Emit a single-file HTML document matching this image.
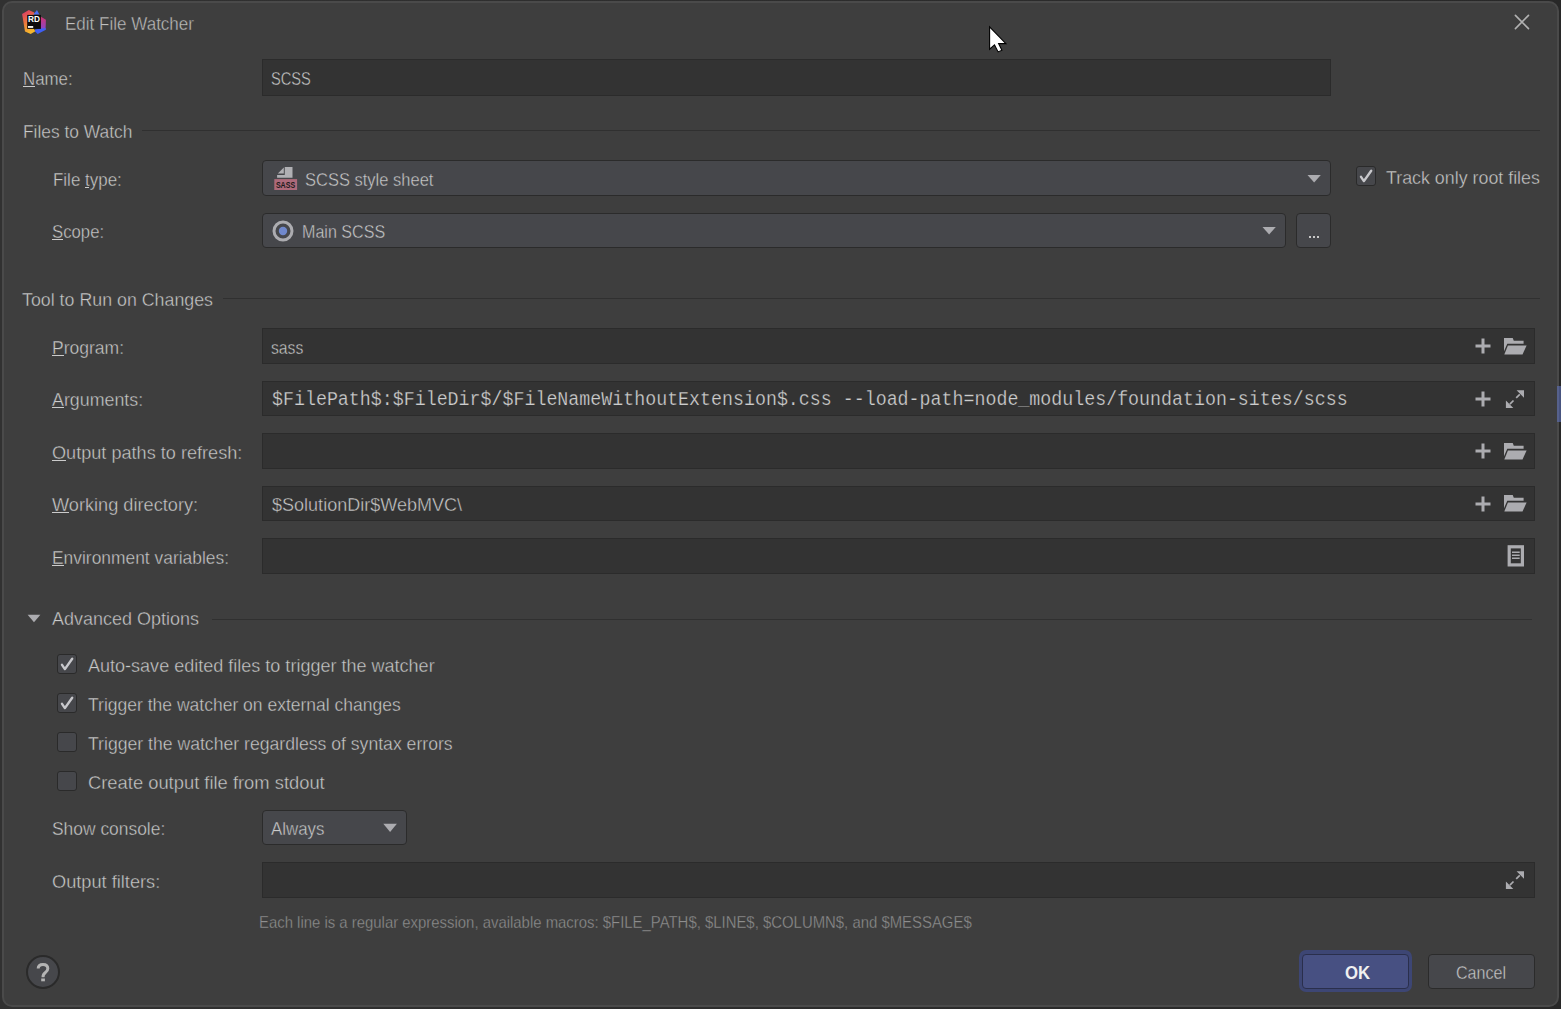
<!DOCTYPE html>
<html><head><meta charset="utf-8"><style>
html,body{margin:0;padding:0;width:1561px;height:1009px;overflow:hidden;background:linear-gradient(to right,#313131,#282828)}
.r{position:absolute;box-sizing:border-box}
.t{position:absolute;white-space:pre;margin:0;padding:0;transform-origin:0 0}
u{text-decoration:underline;text-decoration-thickness:1.5px;text-underline-offset:1px}
</style></head><body>
<div class="r" style="left:2px;top:1px;width:1557px;height:1006px;background:#3e3e3e;border:2px solid #4a4a4a;border-radius:10px"></div>
<div class="r" style="left:1557px;top:386px;width:2px;height:36px;background:#56618c"></div>
<div class="r" style="left:1559px;top:386px;width:2px;height:36px;background:#48537f"></div>
<svg class="r" style="left:20px;top:8px" width="28" height="28" viewBox="20 8 28 28">
<defs><linearGradient id="g1" x1="0" y1="0" x2="0.35" y2="1"><stop offset="0" stop-color="#d8336f"/><stop offset="0.5" stop-color="#e9703f"/><stop offset="1" stop-color="#f6b72c"/></linearGradient>
<linearGradient id="g2" x1="0" y1="0" x2="0" y2="1"><stop offset="0" stop-color="#d3336c"/><stop offset="1" stop-color="#8a45c8"/></linearGradient></defs>
<polygon points="22.1,13.9 28.8,10.1 34.2,12.6 34.2,30 35.8,31.1 30.7,33.9 25,31.4" fill="url(#g1)"/>
<polygon points="33.2,14.6 37,10.1 39.4,14.6" fill="#4b6cf2"/>
<polygon points="40.5,16.4 45.9,19.7 45.6,29 40.5,29" fill="url(#g2)"/>
<polygon points="35,29.5 40.5,28.5 45.9,28.3 45.9,29.8 37.7,34 35,31.4" fill="#3f5ff3"/>
<rect x="27.2" y="14.9" width="13.7" height="14" fill="#0d0a0d"/>
<text x="27.9" y="22.1" font-family="Liberation Sans" font-weight="bold" font-size="8.6" fill="#ffffff" textLength="12" lengthAdjust="spacingAndGlyphs" style="text-rendering:geometricPrecision">RD</text>
<rect x="28" y="26" width="5.2" height="1.9" fill="#f0f0f0"/>
</svg>
<div class="t" style="left:64.90px;top:14.76px;font-size:18px;line-height:18px;letter-spacing:0.000px;color:#c0c0c0;font-weight:normal;font-family:'Liberation Sans', sans-serif;transform:scaleX(0.9458);-webkit-text-stroke:0.4px #3e3e3e;">Edit File Watcher</div>
<svg class="r" style="left:1514px;top:14px" width="16" height="16" viewBox="0 0 16 16"><path d="M1.4 1.4 L14.5 14.6 M14.5 1.4 L1.4 14.6" stroke="#b2b2b2" stroke-width="1.6" stroke-linecap="round"/></svg>
<div class="r" style="left:22.70px;top:85.90px;width:12.18px;height:1.6px;background:#cbcbcb"></div>
<div class="t" style="left:22.70px;top:68.92px;font-size:19px;line-height:19px;letter-spacing:0.000px;color:#cbcbcb;font-weight:normal;font-family:'Liberation Sans', sans-serif;transform:scaleX(0.8875);-webkit-text-stroke:0.4px #3e3e3e;">Name:</div>
<div class="r" style="left:262px;top:59px;width:1069px;height:37px;background:#333333;border:1px solid #2b2b2b;box-sizing:border-box"></div>
<div class="t" style="left:271.40px;top:68.92px;font-size:19px;line-height:19px;letter-spacing:0.000px;color:#cbcbcb;font-weight:normal;font-family:'Liberation Sans', sans-serif;transform:scaleX(0.7710);-webkit-text-stroke:0.4px #333333;">SCSS</div>
<div class="t" style="left:23.00px;top:121.92px;font-size:19px;line-height:19px;letter-spacing:0.000px;color:#cbcbcb;font-weight:normal;font-family:'Liberation Sans', sans-serif;transform:scaleX(0.9136);-webkit-text-stroke:0.4px #3e3e3e;">Files to Watch</div>
<div class="r" style="left:142px;top:130px;width:1398px;height:1px;background:#303030"></div>
<div class="r" style="left:84.73px;top:186.90px;width:4.71px;height:1.6px;background:#cbcbcb"></div>
<div class="t" style="left:52.70px;top:169.92px;font-size:19px;line-height:19px;letter-spacing:0.000px;color:#cbcbcb;font-weight:normal;font-family:'Liberation Sans', sans-serif;transform:scaleX(0.8922);-webkit-text-stroke:0.4px #3e3e3e;">File type:</div>
<div class="r" style="left:262px;top:160px;width:1069px;height:36px;background:#46474b;border:1px solid #2b2b2b;box-sizing:border-box;border-radius:4px"></div>
<svg class="r" style="left:273px;top:166px" width="26" height="25" viewBox="273 166 26 25">
<path d="M284.75 167 H292.5 V177.75 H277.1 V175 H284.75 Z" fill="#b0b0b4"/>
<path d="M277.8 173.6 L283.8 167.6 V173.6 Z" fill="#b0b0b4"/>
<rect x="274.3" y="179.1" width="22.8" height="10.9" fill="#ad6a7a"/>
<text x="275.9" y="188.3" font-family="Liberation Sans" font-weight="bold" font-size="9.6" fill="#1c1a1b" textLength="19.3" lengthAdjust="spacingAndGlyphs">SASS</text>
</svg>
<div class="t" style="left:304.70px;top:169.62px;font-size:19px;line-height:19px;letter-spacing:0.000px;color:#cbcbcb;font-weight:normal;font-family:'Liberation Sans', sans-serif;transform:scaleX(0.8684);-webkit-text-stroke:0.4px #46474b;">SCSS style sheet</div>
<svg class="r" style="left:1307px;top:174px" width="15" height="10" viewBox="0 0 15 10"><path d="M0.5 1 L13.8 1 L7.15 8.5 Z" fill="#acacb0"/></svg>
<div class="r" style="left:1356px;top:166px;width:20px;height:20px;background:#46474b;border:1px solid #2a2a2a;box-sizing:border-box;border-radius:3px"></div>
<svg class="r" style="left:1356px;top:166px" width="20" height="20" viewBox="0 0 20 20"><path d="M5 10.8 L7.9 15.1 L15.2 4.8" stroke="#c8c8cc" stroke-width="2.4" fill="none" stroke-linecap="round" stroke-linejoin="round"/></svg>
<div class="t" style="left:1386.40px;top:167.92px;font-size:19px;line-height:19px;letter-spacing:0.000px;color:#cbcbcb;font-weight:normal;font-family:'Liberation Sans', sans-serif;transform:scaleX(0.9384);-webkit-text-stroke:0.4px #3e3e3e;">Track only root files</div>
<div class="r" style="left:52.30px;top:238.90px;width:11.16px;height:1.6px;background:#cbcbcb"></div>
<div class="t" style="left:52.30px;top:221.92px;font-size:19px;line-height:19px;letter-spacing:0.000px;color:#cbcbcb;font-weight:normal;font-family:'Liberation Sans', sans-serif;transform:scaleX(0.8810);-webkit-text-stroke:0.4px #3e3e3e;">Scope:</div>
<div class="r" style="left:262px;top:213px;width:1024px;height:35px;background:#46474b;border:1px solid #2b2b2b;box-sizing:border-box;border-radius:4px"></div>
<svg class="r" style="left:272px;top:220px" width="22" height="22" viewBox="0 0 22 22"><circle cx="11" cy="11" r="9" stroke="#acacb0" stroke-width="3" fill="none"/><circle cx="11" cy="11" r="4.2" fill="#7088cc"/></svg>
<div class="t" style="left:301.80px;top:221.52px;font-size:19px;line-height:19px;letter-spacing:0.000px;color:#cbcbcb;font-weight:normal;font-family:'Liberation Sans', sans-serif;transform:scaleX(0.8468);-webkit-text-stroke:0.4px #46474b;">Main SCSS</div>
<svg class="r" style="left:1262px;top:226px" width="15" height="10" viewBox="0 0 15 10"><path d="M0.5 1 L13.8 1 L7.15 8.5 Z" fill="#acacb0"/></svg>
<div class="r" style="left:1296px;top:213px;width:35px;height:35px;background:#46474b;border:1px solid #2b2b2b;box-sizing:border-box;border-radius:4px"></div>
<div class="r" style="left:1308.5px;top:235.5px;width:2.2px;height:2.2px;background:#c8c8c8"></div>
<div class="r" style="left:1312.5px;top:235.5px;width:2.2px;height:2.2px;background:#c8c8c8"></div>
<div class="r" style="left:1316.5px;top:235.5px;width:2.2px;height:2.2px;background:#c8c8c8"></div>
<div class="t" style="left:22.40px;top:289.92px;font-size:19px;line-height:19px;letter-spacing:0.000px;color:#cbcbcb;font-weight:normal;font-family:'Liberation Sans', sans-serif;transform:scaleX(0.9369);-webkit-text-stroke:0.4px #3e3e3e;">Tool to Run on Changes</div>
<div class="r" style="left:223px;top:298px;width:1317px;height:1px;background:#303030"></div>
<div class="r" style="left:52.30px;top:354.90px;width:11.69px;height:1.6px;background:#cbcbcb"></div>
<div class="t" style="left:52.30px;top:337.92px;font-size:19px;line-height:19px;letter-spacing:0.000px;color:#cbcbcb;font-weight:normal;font-family:'Liberation Sans', sans-serif;transform:scaleX(0.9227);-webkit-text-stroke:0.4px #3e3e3e;">Program:</div>
<div class="r" style="left:262px;top:328px;width:1273px;height:36px;background:#333333;border:1px solid #2b2b2b;box-sizing:border-box"></div>
<svg class="r" style="left:1475px;top:338.0px" width="16" height="16" viewBox="0 0 16 16"><path d="M8 0.5 V15.5 M0.5 8 H15.5" stroke="#acacb0" stroke-width="3"/></svg>
<svg class="r" style="left:1504px;top:337.9px" width="24" height="18" viewBox="0 0 24 18"><path d="M0 0 H8.7 L9.8 2.7 H19.6 V5.8 H3.3 L0 13.2 Z" fill="#acacb0"/><path d="M3.9 7.4 H22.6 L18.5 16.6 H0.3 Z" fill="#acacb0"/></svg>
<div class="t" style="left:271.10px;top:337.92px;font-size:19px;line-height:19px;letter-spacing:0.000px;color:#cbcbcb;font-weight:normal;font-family:'Liberation Sans', sans-serif;transform:scaleX(0.8282);-webkit-text-stroke:0.4px #333333;">sass</div>
<div class="r" style="left:52.30px;top:406.90px;width:11.88px;height:1.6px;background:#cbcbcb"></div>
<div class="t" style="left:52.30px;top:389.92px;font-size:19px;line-height:19px;letter-spacing:0.000px;color:#cbcbcb;font-weight:normal;font-family:'Liberation Sans', sans-serif;transform:scaleX(0.9378);-webkit-text-stroke:0.4px #3e3e3e;">Arguments:</div>
<div class="r" style="left:262px;top:381px;width:1273px;height:35px;background:#333333;border:1px solid #2b2b2b;box-sizing:border-box"></div>
<svg class="r" style="left:1475px;top:390.5px" width="16" height="16" viewBox="0 0 16 16"><path d="M8 0.5 V15.5 M0.5 8 H15.5" stroke="#acacb0" stroke-width="3"/></svg>
<svg class="r" style="left:1505px;top:389.0px" width="20" height="20" viewBox="0 0 20 20"><path d="M11.6 1.3 H19 V8.7 Z M0.9 11.6 V19 H8.3 Z" fill="#acacb0"/><path d="M14.8 5.3 L11.2 8.9 M4.9 15.1 L8.5 11.5" stroke="#acacb0" stroke-width="1.7"/></svg>
<div class="r" style="left:52.30px;top:459.90px;width:14.09px;height:1.6px;background:#cbcbcb"></div>
<div class="t" style="left:52.30px;top:442.92px;font-size:19px;line-height:19px;letter-spacing:0.000px;color:#cbcbcb;font-weight:normal;font-family:'Liberation Sans', sans-serif;transform:scaleX(0.9534);-webkit-text-stroke:0.4px #3e3e3e;">Output paths to refresh:</div>
<div class="r" style="left:262px;top:433px;width:1273px;height:36px;background:#333333;border:1px solid #2b2b2b;box-sizing:border-box"></div>
<svg class="r" style="left:1475px;top:443.0px" width="16" height="16" viewBox="0 0 16 16"><path d="M8 0.5 V15.5 M0.5 8 H15.5" stroke="#acacb0" stroke-width="3"/></svg>
<svg class="r" style="left:1504px;top:442.9px" width="24" height="18" viewBox="0 0 24 18"><path d="M0 0 H8.7 L9.8 2.7 H19.6 V5.8 H3.3 L0 13.2 Z" fill="#acacb0"/><path d="M3.9 7.4 H22.6 L18.5 16.6 H0.3 Z" fill="#acacb0"/></svg>
<div class="r" style="left:52.30px;top:511.90px;width:17.15px;height:1.6px;background:#cbcbcb"></div>
<div class="t" style="left:52.30px;top:494.92px;font-size:19px;line-height:19px;letter-spacing:0.000px;color:#cbcbcb;font-weight:normal;font-family:'Liberation Sans', sans-serif;transform:scaleX(0.9565);-webkit-text-stroke:0.4px #3e3e3e;">Working directory:</div>
<div class="r" style="left:262px;top:486px;width:1273px;height:35px;background:#333333;border:1px solid #2b2b2b;box-sizing:border-box"></div>
<svg class="r" style="left:1475px;top:495.5px" width="16" height="16" viewBox="0 0 16 16"><path d="M8 0.5 V15.5 M0.5 8 H15.5" stroke="#acacb0" stroke-width="3"/></svg>
<svg class="r" style="left:1504px;top:495.4px" width="24" height="18" viewBox="0 0 24 18"><path d="M0 0 H8.7 L9.8 2.7 H19.6 V5.8 H3.3 L0 13.2 Z" fill="#acacb0"/><path d="M3.9 7.4 H22.6 L18.5 16.6 H0.3 Z" fill="#acacb0"/></svg>
<div class="t" style="left:272.00px;top:494.92px;font-size:19px;line-height:19px;letter-spacing:0.000px;color:#cbcbcb;font-weight:normal;font-family:'Liberation Sans', sans-serif;transform:scaleX(0.9491);-webkit-text-stroke:0.4px #333333;">$SolutionDir$WebMVC\</div>
<div class="r" style="left:52.30px;top:564.90px;width:11.61px;height:1.6px;background:#cbcbcb"></div>
<div class="t" style="left:52.30px;top:547.92px;font-size:19px;line-height:19px;letter-spacing:0.000px;color:#cbcbcb;font-weight:normal;font-family:'Liberation Sans', sans-serif;transform:scaleX(0.9159);-webkit-text-stroke:0.4px #3e3e3e;">Environment variables:</div>
<div class="r" style="left:262px;top:538px;width:1273px;height:36px;background:#333333;border:1px solid #2b2b2b;box-sizing:border-box"></div>
<svg class="r" style="left:1507px;top:545.0px" width="18" height="22" viewBox="0 0 18 22"><rect x="2.2" y="1.8" width="13.2" height="18.1" stroke="#acacb0" stroke-width="3.2" fill="none"/><path d="M5 7.2 H12.7 M5 10.2 H12.7 M5 13.3 H12.7" stroke="#acacb0" stroke-width="1.4"/></svg>
<div class="t" style="left:271.90px;top:389.67px;font-size:20px;line-height:20px;letter-spacing:0.000px;color:#cdcdcd;font-weight:normal;font-family:'Liberation Mono', monospace;transform:scaleX(0.9145);-webkit-text-stroke:0.25px #333333;">$FilePath$:$FileDir$/$FileNameWithoutExtension$.css --load-path=node_modules/foundation-sites/scss</div>
<svg class="r" style="left:27px;top:614px" width="14" height="9" viewBox="0 0 14 9"><path d="M0.6 0.8 L13.4 0.8 L7 8.2 Z" fill="#acacb0"/></svg>
<div class="t" style="left:52.40px;top:608.92px;font-size:19px;line-height:19px;letter-spacing:0.000px;color:#cbcbcb;font-weight:normal;font-family:'Liberation Sans', sans-serif;transform:scaleX(0.9462);-webkit-text-stroke:0.4px #3e3e3e;">Advanced Options</div>
<div class="r" style="left:212px;top:619px;width:1320px;height:1px;background:#303030"></div>
<div class="r" style="left:57px;top:654px;width:20px;height:20px;background:#46474b;border:1px solid #2a2a2a;box-sizing:border-box;border-radius:3px"></div>
<svg class="r" style="left:57px;top:654px" width="20" height="20" viewBox="0 0 20 20"><path d="M5 10.8 L7.9 15.1 L15.2 4.8" stroke="#c8c8cc" stroke-width="2.4" fill="none" stroke-linecap="round" stroke-linejoin="round"/></svg>
<div class="t" style="left:87.60px;top:655.92px;font-size:19px;line-height:19px;letter-spacing:0.000px;color:#cbcbcb;font-weight:normal;font-family:'Liberation Sans', sans-serif;transform:scaleX(0.9486);-webkit-text-stroke:0.4px #3e3e3e;">Auto-save edited files to trigger the watcher</div>
<div class="r" style="left:57px;top:693px;width:20px;height:20px;background:#46474b;border:1px solid #2a2a2a;box-sizing:border-box;border-radius:3px"></div>
<svg class="r" style="left:57px;top:693px" width="20" height="20" viewBox="0 0 20 20"><path d="M5 10.8 L7.9 15.1 L15.2 4.8" stroke="#c8c8cc" stroke-width="2.4" fill="none" stroke-linecap="round" stroke-linejoin="round"/></svg>
<div class="t" style="left:87.60px;top:694.92px;font-size:19px;line-height:19px;letter-spacing:0.000px;color:#cbcbcb;font-weight:normal;font-family:'Liberation Sans', sans-serif;transform:scaleX(0.9217);-webkit-text-stroke:0.4px #3e3e3e;">Trigger the watcher on external changes</div>
<div class="r" style="left:57px;top:732px;width:20px;height:20px;background:#46474b;border:1px solid #2a2a2a;box-sizing:border-box;border-radius:3px"></div>
<div class="t" style="left:87.60px;top:733.92px;font-size:19px;line-height:19px;letter-spacing:0.000px;color:#cbcbcb;font-weight:normal;font-family:'Liberation Sans', sans-serif;transform:scaleX(0.9274);-webkit-text-stroke:0.4px #3e3e3e;">Trigger the watcher regardless of syntax errors</div>
<div class="r" style="left:57px;top:771px;width:20px;height:20px;background:#46474b;border:1px solid #2a2a2a;box-sizing:border-box;border-radius:3px"></div>
<div class="t" style="left:87.60px;top:772.92px;font-size:19px;line-height:19px;letter-spacing:0.000px;color:#cbcbcb;font-weight:normal;font-family:'Liberation Sans', sans-serif;transform:scaleX(0.9661);-webkit-text-stroke:0.4px #3e3e3e;">Create output file from stdout</div>
<div class="t" style="left:52.20px;top:819.22px;font-size:19px;line-height:19px;letter-spacing:0.000px;color:#cbcbcb;font-weight:normal;font-family:'Liberation Sans', sans-serif;transform:scaleX(0.9166);-webkit-text-stroke:0.4px #3e3e3e;">Show console:</div>
<div class="r" style="left:262px;top:810px;width:145px;height:35px;background:#46474b;border:1px solid #2b2b2b;box-sizing:border-box;border-radius:4px"></div>
<div class="t" style="left:271.30px;top:819.22px;font-size:19px;line-height:19px;letter-spacing:0.000px;color:#cbcbcb;font-weight:normal;font-family:'Liberation Sans', sans-serif;transform:scaleX(0.8880);-webkit-text-stroke:0.4px #46474b;">Always</div>
<svg class="r" style="left:383px;top:823px" width="15" height="10" viewBox="0 0 15 10"><path d="M0.3 0.8 L13.9 0.8 L7.1 9 Z" fill="#acacb0"/></svg>
<div class="t" style="left:52.20px;top:871.52px;font-size:19px;line-height:19px;letter-spacing:0.000px;color:#cbcbcb;font-weight:normal;font-family:'Liberation Sans', sans-serif;transform:scaleX(0.9584);-webkit-text-stroke:0.4px #3e3e3e;">Output filters:</div>
<div class="r" style="left:262px;top:862px;width:1273px;height:36px;background:#333333;border:1px solid #2b2b2b;box-sizing:border-box"></div>
<svg class="r" style="left:1505px;top:870px" width="20" height="20" viewBox="0 0 20 20"><path d="M11.6 1.3 H19 V8.7 Z M0.9 11.6 V19 H8.3 Z" fill="#acacb0"/><path d="M14.8 5.3 L11.2 8.9 M4.9 15.1 L8.5 11.5" stroke="#acacb0" stroke-width="1.7"/></svg>
<div class="t" style="left:258.60px;top:915.46px;font-size:16px;line-height:16px;letter-spacing:0.000px;color:#8e8e8e;font-weight:normal;font-family:'Liberation Sans', sans-serif;transform:scaleX(0.9315);-webkit-text-stroke:0.3px #3e3e3e;">Each line is a regular expression, available macros: $FILE_PATH$, $LINE$, $COLUMN$, and $MESSAGE$</div>
<div class="r" style="left:26px;top:955px;width:34px;height:34px;box-sizing:border-box;border-radius:50%;background:#46474b;border:2px solid #2a2a2a"></div>
<svg class="r" style="left:26px;top:955px" width="34" height="34" viewBox="26 955 34 34"><path d="M38.2 968.6 Q38.2 964.4 43 964.4 Q47.8 964.4 47.8 968.6 Q47.8 971 45.4 972.6 Q43 974.2 43 977.2" stroke="#b4b4b4" stroke-width="3" fill="none"/><rect x="41.2" y="978.5" width="3.7" height="2.8" fill="#b4b4b4"/></svg>
<div class="r" style="left:1298.8px;top:950.4px;width:113.2px;height:41.8px;box-sizing:border-box;border-radius:7px;background:#3d4674"></div>
<div class="r" style="left:1302px;top:953.6px;width:107px;height:35.4px;box-sizing:border-box;border-radius:4px;background:#475082;border:1px solid #2a2f4c"></div>
<div class="t" style="left:1344.80px;top:962.92px;font-size:19px;line-height:19px;letter-spacing:0.000px;color:#f0f0f0;font-weight:bold;font-family:'Liberation Sans', sans-serif;transform:scaleX(0.8807);">OK</div>
<div class="r" style="left:1428px;top:954px;width:107px;height:35px;background:#46474b;border:1px solid #2b2b2b;box-sizing:border-box;border-radius:4px"></div>
<div class="t" style="left:1456.30px;top:962.92px;font-size:19px;line-height:19px;letter-spacing:0.000px;color:#cbcbcb;font-weight:normal;font-family:'Liberation Sans', sans-serif;transform:scaleX(0.8456);-webkit-text-stroke:0.4px #46474b;">Cancel</div>
<svg class="r" style="left:987px;top:25px" width="24" height="30" viewBox="0 0 24 30"><path d="M2.6 1.9 L2.6 24.2 L7.5 19.9 L11.1 26.9 L14.9 25.3 L11.6 18.6 L18.9 18.6 Z" fill="#ffffff" stroke="#000000" stroke-width="1.1" stroke-linejoin="miter"/></svg>
</body></html>
